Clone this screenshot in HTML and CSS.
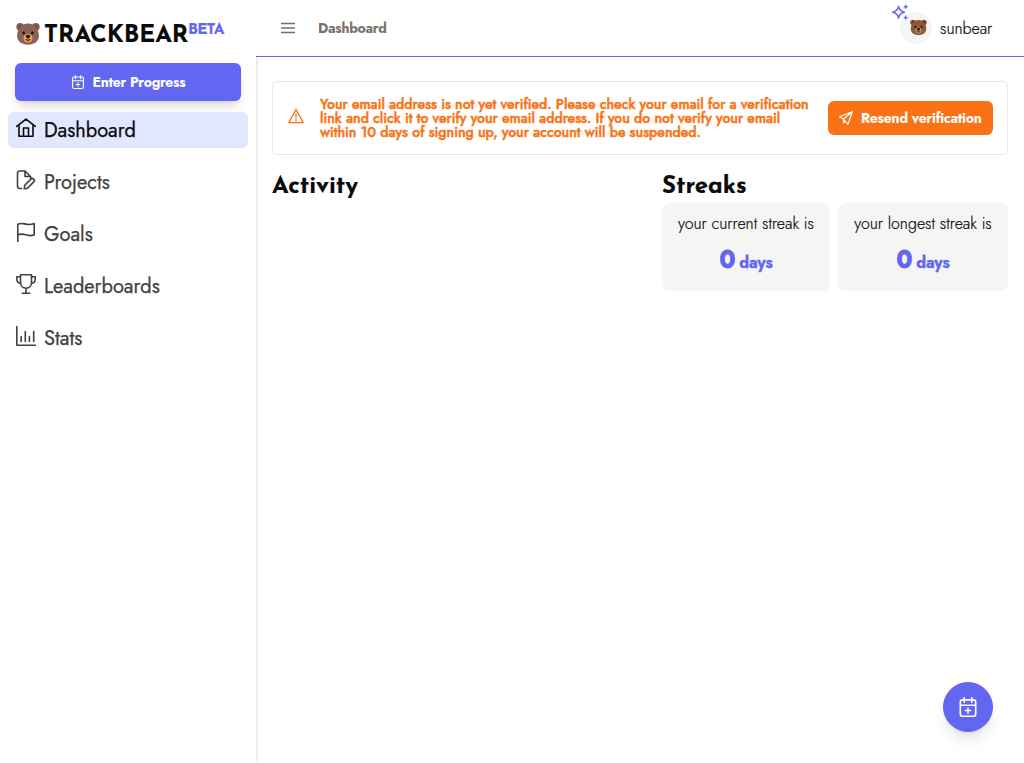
FILE: index.html
```html
<!DOCTYPE html>
<html lang="en">
<head>
<meta charset="utf-8">
<title>TrackBear</title>
<link rel="stylesheet" href="styles.css">
</head>
<body>
<svg class="defs" width="0" height="0">
  <symbol id="calendar" viewBox="0 0 20 20"><rect x="2.300" y="2.900" width="15.400" height="16.300" rx="2.200"/><path d="M2.500 8.300h15M6.200.8v4.500M13.800.8v4.500M10 11v5M7.500 13.500h5"/></symbol>
  <symbol id="bear" viewBox="0 0 24 24">
    <circle class="bear-fur" cx="4.2" cy="4.8" r="3.9"/><circle class="bear-fur" cx="19.8" cy="4.8" r="3.9"/>
    <circle class="bear-ear" cx="4.4" cy="4.8" r="2.2"/><circle class="bear-ear" cx="19.6" cy="4.8" r="2.2"/>
    <path class="bear-fur" d="M12 1.500C18 1.500 22.700 6 22.900 13.500C23 19.500 18.500 22.700 12 22.700S1 19.500 1.100 13.500C1.300 6 6 1.500 12 1.500z"/>
    <ellipse class="bear-muzzle" cx="12" cy="16.300" rx="4.500" ry="4.200"/>
    <circle class="bear-dark" cx="7.600" cy="11" r="1.400"/><circle class="bear-dark" cx="16.400" cy="11" r="1.400"/>
    <ellipse class="bear-dark" cx="12" cy="14.300" rx="2.300" ry="1.600"/>
    <path class="bear-mouth" d="M12 15v2.500M9.600 17.500q2.400 2 4.800 0"/>
  </symbol>
</svg>
<div class="app">
  <aside class="sidebar">
    <div class="brand"><svg class="brand-bear"><use href="#bear"/></svg><span class="brand-name">TRACKBEAR</span><span class="beta">BETA</span></div>
    <button class="enter"><svg class="icon icon-14"><use href="#calendar"/></svg><span class="enter-label">Enter Progress</span></button>
    <nav class="nav">
      <a class="item active"><svg class="icon" viewBox="0 0 20 20"><path d="M.7 8.300 10 1.200l9.300 7.100M3 7v11.200h14V7M7.500 18V10h5v8"/></svg><span>Dashboard</span></a>
      <a class="item"><svg class="icon" viewBox="0 0 20 20"><path d="M5.500 18.500H3.700a2.200 2.200 0 0 1-2.200-2.200V3.200A2.200 2.200 0 0 1 3.700 1H9l5.700 5.700V8.500M9 1.200v5.300h5.500M8.200 18.800l.5-3.500 6.200-6.200a1.900 1.900 0 0 1 2.900 2.800l-6.300 6.300z"/></svg><span>Projects</span></a>
      <a class="item"><svg class="icon" viewBox="0 0 20 20"><path d="M1.800 19.500V2.300C7-.8 10.500 4.700 18.200 1.500V12.700C11 16 8.500 9.800 1.800 13"/></svg><span>Goals</span></a>
      <a class="item"><svg class="icon" viewBox="0 0 20 20"><path d="M4.500.8h11v7.400c0 3.500-2.200 6-5.500 6s-5.500-2.500-5.500-6zM4.500 2.800H.8v2.500c0 2.500 1.600 4 4 4M15.500 2.800h3.700v2.500c0 2.500-1.600 4-4 4M10 14.200v5M6.200 19.200h7.600"/></svg><span>Leaderboards</span></a>
      <a class="item"><svg class="icon" viewBox="0 0 20 20"><path d="M.8.500v18.700h18.700M5.200 10.500v5M9.300 5.500v10M13.400 10.500v5M17.700 5.500v10"/></svg><span>Stats</span></a>
    </nav>
  </aside>
  <div class="page">
    <header class="topbar">
      <svg class="menu" viewBox="0 0 14 12"><path d="M0 1.500h14M0 6h14M0 10.500h14"/></svg>
      <span class="crumb">Dashboard</span>
      <div class="user">
        <span class="avatar"><svg class="avatar-bear"><use href="#bear"/></svg>
          <svg class="sparkles" viewBox="0 0 17 17"><path d="M6.500 2.200Q7.300 7.200 12.500 8.200Q7.300 9.200 6.500 14.200Q5.700 9.200.7 8.200Q5.700 7.200 6.500 2.200zM13.700.8v4M11.700 2.800h4M13.700 11.600v4M11.700 13.600h4"/></svg>
        </span>
        <span class="username">sunbear</span>
      </div>
    </header>
    <main class="main">
      <section class="alert">
        <svg class="icon icon-16" viewBox="0 0 20 20"><path d="M10 1.700 19 18.300H1zM10 7.500v5M10 14.300v1.700"/></svg>
        <p class="message">Your email address is not yet verified. Please check your email for a verification<br>link and click it to verify your email address. If you do not verify your email<br>within 10 days of signing up, your account will be suspended.</p>
        <button class="resend"><svg class="icon icon-14" viewBox="0 0 20 20"><path d="M19 1 .8 8.200l5.500 3.300L12.800 19zM19 1 6.300 11.500M6.300 11.500v5.300l3.200-2"/></svg><span class="resend-label">Resend verification</span></button>
      </section>
      <div class="columns">
        <section><h2 class="heading">Activity</h2></section>
        <section>
          <h2 class="heading">Streaks</h2>
          <div class="cards">
            <div class="card"><span class="caption">your current streak is</span><strong class="value"><span class="zero">0</span><span class="days">days</span></strong></div>
            <div class="card"><span class="caption">your longest streak is</span><strong class="value"><span class="zero">0</span><span class="days">days</span></strong></div>
          </div>
        </section>
      </div>
    </main>
  </div>
  <button class="fab"><svg class="icon"><use href="#calendar"/></svg></button>
</div>
</body>
</html>
```
FILE: styles.css
```css
* { box-sizing: border-box; }
body { margin: 0; background: #fff; color: #0c0a09; font-family: Jost, Lato, sans-serif; font-size: 16px; }
button { font: inherit; border: 0; padding: 0; }
span { white-space: nowrap; }
svg { flex: none; display: block; }
.defs { position: absolute; }
.app { position: relative; display: flex; height: 763px; overflow: hidden; }
.sidebar { width: 256px; flex: none; padding: 15px 8px; box-shadow: 1px 0 3px rgba(0,0,0,.12); }
.brand { display: flex; align-items: flex-start; height: 38px; padding-left: 8px; }
.brand-bear { width: 24px; height: 24px; margin: 7px 4px 0 0; }
.bear-fur { fill: var(--fur, #8d6158); }
.bear-ear { fill: var(--ear, #704b43); }
.bear-muzzle { fill: var(--muzzle, #f4a34d); }
.bear-dark { fill: #171717; }
.bear-mouth { fill: none; stroke: #171717; stroke-width: 1; }
.brand-name { font: 700 24px/36px "Josefin Sans", Lato, sans-serif; padding-top: 3px; width: 144px; -webkit-text-stroke: .2px; }
.beta { font: 700 15.5px/28px "Josefin Sans", Lato, sans-serif; color: #6366f1; letter-spacing: -.9px; padding-top: 1px; -webkit-text-stroke: .2px; }
.enter { display: flex; align-items: center; justify-content: center; gap: 8px; width: 226px; height: 38px; margin: 10px 0 11px 7px; border-radius: 6px; background: #6366f1; color: #fff; box-shadow: 0 8px 12px -3px rgba(0,0,0,.12), 0 3px 5px -2px rgba(0,0,0,.1); }
.enter-label, .resend-label { font-size: 14px; font-weight: 700; line-height: 14px; letter-spacing: -.23px; }
.icon { width: 20px; height: 20px; fill: none; stroke: currentColor; stroke-width: 1.6; stroke-linecap: round; stroke-linejoin: round; }
.icon-14 { width: 14px; height: 14px; margin-bottom: 1px; }
.icon-16 { width: 16px; height: 16px; }
.nav { display: grid; gap: 16px; }
.item { display: flex; align-items: center; gap: 8px; height: 36px; padding: 2px 8px 0; border-radius: 6px; color: #44403c; font-size: 20px; line-height: 28px; -webkit-text-stroke: .25px; }
.item .icon { margin-bottom: 6px; }
.active { color: #0c0a09; background: #e0e7ff; }
.page { flex: 1; min-width: 0; position: relative; }
.topbar { display: flex; align-items: center; height: 57px; background: #fff; border-bottom: 1px solid #6366f1; padding: 0 32px 0 25px; }
.menu { width: 14px; height: 12px; fill: none; stroke: #78716c; stroke-width: 1.4; }
.crumb { margin-left: 23px; color: #78716c; font-size: 14px; font-weight: 700; letter-spacing: -.25px; }
.user { display: flex; align-items: center; gap: 8px; margin-left: auto; }
.avatar { position: relative; display: flex; align-items: center; justify-content: center; width: 32px; height: 32px; border-radius: 50%; background: #f5f5f4; }
.avatar-bear { --fur: #8c5833; --ear: #5b341e; --muzzle: #c58a5c; width: 17px; height: 17px; margin: 0 0 1px 4px; }
.sparkles { position: absolute; left: -8px; top: -8px; width: 17px; height: 17px; fill: none; stroke: #6366f1; stroke-width: 1.4; stroke-linejoin: round; }
.username { font-weight: 300; line-height: 24px; width: 52px; padding-top: 2px; -webkit-text-stroke: .2px; }
.main { padding: 24px 16px; }
.alert { display: flex; align-items: center; height: 74px; padding: 0 14px 0 15px; border: 1px solid #e5e7eb; border-radius: 6px; color: #f97316; }
.alert > .icon-16 { margin-bottom: 4px; }
.message { margin: 0 0 0 16px; font-size: 14px; font-weight: 500; line-height: 14px; white-space: nowrap; -webkit-text-stroke: .5px; }
.resend { display: flex; flex: none; align-items: center; gap: 8px; width: 165px; height: 34px; margin-left: auto; padding-left: 11px; border-radius: 6px; background: #f97316; color: #fff; }
.columns { display: grid; grid-template-columns: 382px 346px; gap: 8px; padding-top: 16px; }
.heading { margin: 0; height: 32px; padding-top: 1px; font: 700 24px/30px "Josefin Sans", Lato, sans-serif; -webkit-text-stroke: .2px; }
.cards { display: grid; grid-template-columns: 168px 170px; gap: 8px; }
.card { display: flex; flex-direction: column; align-items: center; height: 88px; padding-top: 9px; border-radius: 8px; background: #f5f5f4; }
.caption { font-weight: 300; line-height: 24px; -webkit-text-stroke: .2px; }
.value { display: flex; align-items: baseline; gap: 4px; color: #6366f1; line-height: 32px; margin-top: 8px; }
.zero { font-size: 24px; font-weight: 700; -webkit-text-stroke: .8px; transform: scaleY(1.06); }
.days { font-size: 16px; font-weight: 700; letter-spacing: -.2px; -webkit-text-stroke: .3px; }
.fab { position: absolute; left: 943px; top: 682px; display: grid; place-items: center; width: 50px; height: 50px; border: 1px solid #6366f1; border-radius: 50%; background: #6366f1; color: #fff; box-shadow: 0 10px 15px -3px rgba(0,0,0,.1), 0 4px 6px -4px rgba(0,0,0,.1); }
```
